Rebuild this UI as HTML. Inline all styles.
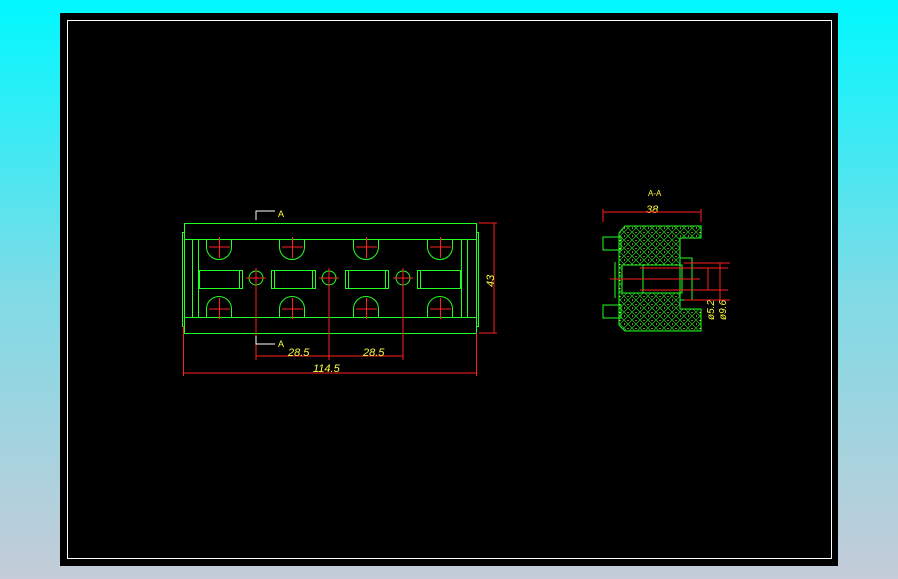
<!DOCTYPE html>
<html><head><style>
html,body{margin:0;padding:0;width:898px;height:579px;overflow:hidden;background:linear-gradient(#00f8ff,#7fdbe6 50%,#c4ccd8);}
svg{position:absolute;left:0;top:0}
</style></head><body>
<svg width="898" height="579" font-family="Liberation Sans, sans-serif">
<defs>
<pattern id="h" width="8" height="8" patternUnits="userSpaceOnUse">
<path d="M0 0L8 8M8 0L0 8" stroke="#1fc81f" stroke-width="0.7"/>
<rect x="3.5" y="0" width="1" height="1" fill="#ffff40"/>
<rect x="0" y="3.5" width="1" height="1" fill="#ffff40"/>
</pattern>
</defs>
<rect x="60" y="13" width="778" height="553" fill="#000"/>
<rect x="67.5" y="20.5" width="764" height="538" fill="none" stroke="#fff" stroke-width="1"/>
<g fill="none" stroke="#22ff22" stroke-width="1">
<rect x="184.5" y="223.5" width="292" height="110"/>
<path d="M184.5 239.5H476.5M184.5 317.5H476.5M184.5 232.5H182.5V326.5H184.5M476.5 232.5H478.5V326.5H476.5M192.5 239.5V317.5M198.5 239.5V317.5M461.5 239.5V317.5M467.5 239.5V317.5"/>
<path d="M206.5 239.5V247A12.5 12.5 0 0 0 231.5 247V239.5M279.5 239.5V247A12.5 12.5 0 0 0 304.5 247V239.5M353.5 239.5V247A12.5 12.5 0 0 0 378.5 247V239.5M427.5 239.5V247A12.5 12.5 0 0 0 452.5 247V239.5"/>
<path d="M206.5 317.5V309A12.5 12.5 0 0 1 231.5 309V317.5M279.5 317.5V309A12.5 12.5 0 0 1 304.5 309V317.5M353.5 317.5V309A12.5 12.5 0 0 1 378.5 309V317.5M427.5 317.5V309A12.5 12.5 0 0 1 452.5 309V317.5"/>
<rect x="199.5" y="270.5" width="43" height="18"/><rect x="271.5" y="270.5" width="44" height="18"/><rect x="345.5" y="270.5" width="43" height="18"/><rect x="417.5" y="270.5" width="43" height="18"/>
<path d="M239.5 270.5V288.5M274.5 270.5V288.5M312.5 270.5V288.5M348.5 270.5V288.5M385.5 270.5V288.5M420.5 270.5V288.5"/>
<circle cx="256" cy="278" r="7"/><circle cx="329" cy="278" r="7"/><circle cx="403" cy="278" r="7"/>
</g>
<g stroke="#ff2020" stroke-width="1" fill="none">
<path d="M209 247H230M219.5 237V258M282 247H303M292.5 237V258M356 247H377M366.5 237V258M430 247H451M440.5 237V258"/>
<path d="M209 309H230M219.5 298V319M282 309H303M292.5 298V319M356 309H377M366.5 298V319M430 309H451M440.5 298V319"/>
<path d="M246 278H266M256 268V360M319 278H339M329 268V360M393 278H413M403 268V360"/>
<path d="M256 356H403M183.5 326V376M476.5 333V376M183 373H476M479 223H497M479 333H497M494 223V333"/>
</g>
<g fill="#ffff40" font-size="11" font-style="italic">
<text x="288" y="356">28.5</text><text x="363" y="356">28.5</text><text x="313" y="372">114.5</text>
<text transform="translate(494,287) rotate(-90)">43</text>
<text x="278" y="217" font-style="normal" font-size="9">A</text><text x="278" y="347" font-style="normal" font-size="9">A</text>
<text x="648" y="196" font-style="normal" font-size="8">A-A</text>
<text x="646" y="213">38</text>
<text transform="translate(714,320) rotate(-90)" font-size="10">ø5.2</text>
<text transform="translate(726,320) rotate(-90)" font-size="10">ø9.6</text>
</g>
<path d="M256 220V211H275M256 336V344H275" stroke="#fff" fill="none"/>
<path d="M619 233L625 226H701V238H680V309H701V331H625L619 325Z" fill="url(#h)" stroke="#22ff22"/>
<rect x="622" y="265" width="60" height="28" fill="#000" stroke="#22ff22"/>
<path d="M622 265H643V293H622M680 238V309M680 258H692V300H680" stroke="#22ff22" fill="none"/>
<path d="M603 237H621V250H603ZM603 305H621V318H603ZM615 262V298" stroke="#22ff22" fill="none"/>
<path d="M603 209V222M701 209V222M603 212H701M640 268H728M640 290H728M610 279H700M708 268V290M720 263V300M684 263H730M684 300H730" stroke="#ff2020" fill="none"/>
</svg>
</body></html>
